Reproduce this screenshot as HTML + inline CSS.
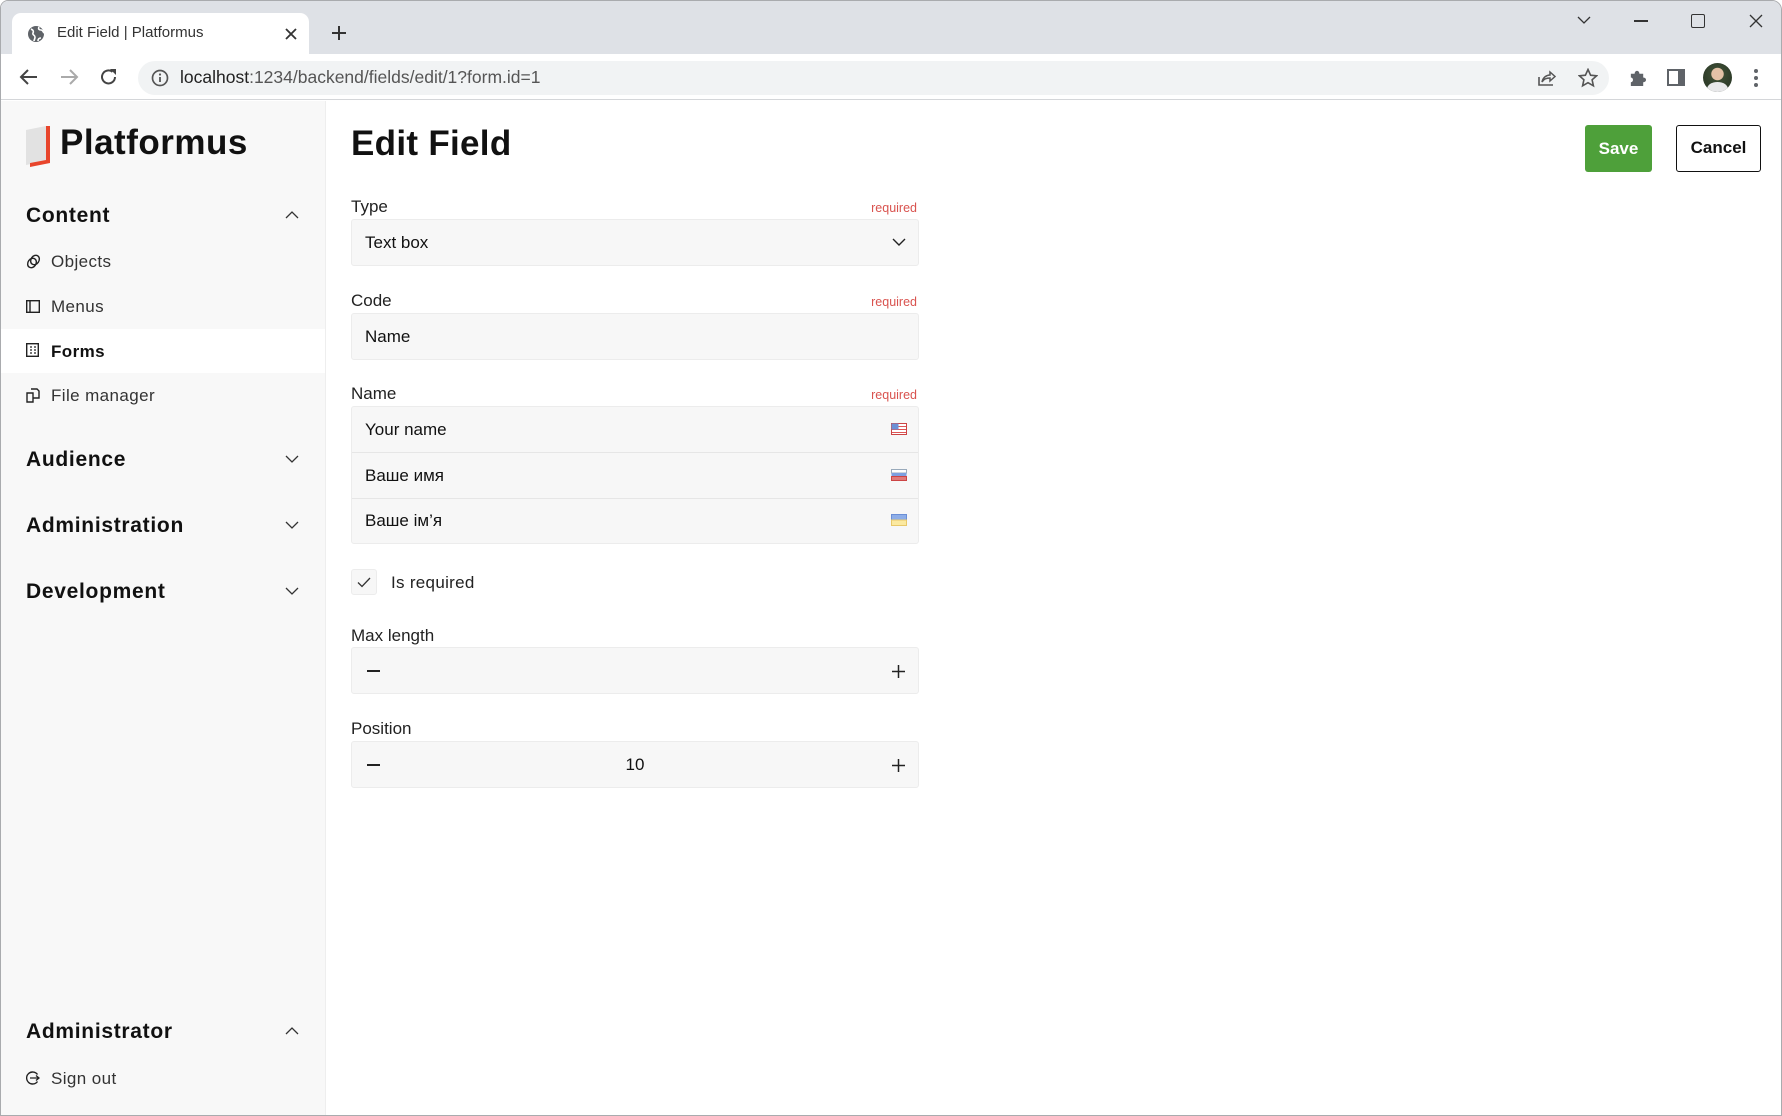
<!DOCTYPE html>
<html><head><meta charset="utf-8">
<style>
*{box-sizing:border-box;margin:0;padding:0}
body{width:1782px;height:1116px;overflow:hidden;background:#fff;font-family:"Liberation Sans","DejaVu Sans",sans-serif;color:#111;position:relative}
.abs{position:absolute}
.win{position:absolute;left:0;top:0;width:1782px;height:1116px;border:1px solid #a9abae;border-radius:8px 10px 0 0;overflow:hidden;background:#fff}
.tabbar{position:absolute;left:0;top:0;width:100%;height:53px;background:#dee1e6}
.tab{position:absolute;left:11px;top:12px;width:297px;height:42px;background:#fff;border-radius:9px 9px 0 0;font-size:15px;color:#333}
.toolbar{position:absolute;left:0;top:53px;width:100%;height:46px;background:#fff;border-bottom:1px solid #d4d6d9}
.omni{position:absolute;left:137px;top:7px;width:1471px;height:34px;border-radius:17px;background:#f1f3f4}
.side{position:absolute;left:0;top:100px;width:325px;height:1016px;background:#f8f8f8;border-right:1px solid #eee}
.sh{position:absolute;left:25px;font-weight:bold;font-size:21px;color:#111;letter-spacing:0.7px}
.si{position:absolute;left:50px;font-size:17px;color:#333;letter-spacing:0.4px}
.chev{position:absolute;left:284px;width:14px;height:14px}
.lbl{position:absolute;left:350px;font-size:17px;color:#222}
.req{position:absolute;right:864px;font-size:12.5px;color:#d9534f}
.inp{position:absolute;left:350px;width:568px;background:#f7f7f7;border:1px solid #ececec;border-radius:3px;font-size:17px;color:#111}
.inp span{position:absolute;left:13px}
</style></head><body>
<div class="win">
 <div class="tabbar">
  <div class="tab">
   <svg class="abs" style="left:15px;top:12px" width="18" height="18" viewBox="0 0 18 18"><circle cx="9" cy="9" r="8" fill="#5f6368"/><path d="M4 4c2 1 3 2 2 4s2 2 2 4-1 3-1 4M12 2c-1 2 0 3 2 3s2 2 3 3M11 16c0-2 1-3 3-3" stroke="#fff" stroke-width="1.6" fill="none"/></svg>
   <div class="abs" style="left:45px;top:11px">Edit Field | Platformus</div>
   <svg class="abs" style="left:273px;top:15px" width="12" height="12" viewBox="0 0 12 12"><path d="M1 1L11 11M11 1L1 11" stroke="#333" stroke-width="1.8"/></svg>
  </div>
  <svg class="abs" style="left:330px;top:24px" width="16" height="16" viewBox="0 0 16 16"><path d="M8 1V15M1 8H15" stroke="#333" stroke-width="2"/></svg>
  <svg class="abs" style="left:1576px;top:14px" width="14" height="10" viewBox="0 0 14 10"><path d="M1 2L7 8L13 2" stroke="#333" stroke-width="1.3" fill="none"/></svg>
  <div class="abs" style="left:1633px;top:19px;width:14px;height:1.5px;background:#333"></div>
  <div class="abs" style="left:1690px;top:13px;width:14px;height:14px;border:1.5px solid #333;border-radius:2px"></div>
  <svg class="abs" style="left:1748px;top:13px" width="14" height="14" viewBox="0 0 14 14"><path d="M1 1L13 13M13 1L1 13" stroke="#333" stroke-width="1.3"/></svg>
 </div>
 <div class="toolbar">
  <svg class="abs" style="left:18px;top:13px" width="20" height="20" viewBox="0 0 20 20"><path d="M18 10H3M9 3L2 10L9 17" stroke="#444" stroke-width="2" fill="none"/></svg>
  <svg class="abs" style="left:58px;top:13px" width="20" height="20" viewBox="0 0 20 20"><path d="M2 10H17M11 3L18 10L11 17" stroke="#aaa" stroke-width="2" fill="none"/></svg>
  <svg class="abs" style="left:98px;top:13px" width="20" height="20" viewBox="0 0 20 20"><path d="M16 10A6.5 6.5 0 1 1 13.5 4.8" stroke="#444" stroke-width="2" fill="none"/><path d="M11 2H17V8Z" fill="#444"/></svg>
  <div class="omni">
   <svg class="abs" style="left:13px;top:8px" width="18" height="18" viewBox="0 0 18 18"><circle cx="9" cy="9" r="7.5" stroke="#555" stroke-width="1.7" fill="none"/><path d="M9 8V13" stroke="#555" stroke-width="1.8"/><circle cx="9" cy="5.5" r="1.1" fill="#555"/></svg>
   <div class="abs" style="left:42px;top:6px;font-size:17.5px;color:#555"><span style="color:#222">localhost</span>:1234/backend/fields/edit/1?form.id=1</div>
   <svg class="abs" style="left:1399px;top:8px" width="20" height="18" viewBox="0 0 20 18"><path d="M2 8V16H16" stroke="#555" stroke-width="1.6" fill="none"/><path d="M5 13C6 8 10 6 13 6V3L18 7.5L13 12V9C9 9 7 10 5 13Z" stroke="#555" stroke-width="1.5" fill="none"/></svg>
   <svg class="abs" style="left:1440px;top:7px" width="20" height="20" viewBox="0 0 20 20"><path d="M10 1.5L12.6 7.2L18.6 7.8L14.1 11.8L15.4 17.8L10 14.7L4.6 17.8L5.9 11.8L1.4 7.8L7.4 7.2Z" stroke="#555" stroke-width="1.6" fill="none"/></svg>
  </div>
  <svg class="abs" style="left:1627px;top:14px" width="19" height="19" viewBox="0 0 20 20"><path d="M3 6H7C7 2 12 2 12 6H16V10C20 10 20 15 16 15V19H3V15C6 15 6 10 3 10Z" fill="#5f6368"/></svg>
  <div class="abs" style="left:1666px;top:15px;width:18px;height:17px;border:2.5px solid #5f6368;border-right-width:7px"></div>
  <div class="abs" style="left:1702px;top:9px;width:29px;height:29px;border-radius:50%;background:radial-gradient(circle at 50% 38%,#e3c1a6 0 26%,#3a4a32 28%,#2f3d2a 60%);overflow:hidden"><div class="abs" style="left:4px;top:19px;width:21px;height:14px;border-radius:50% 50% 0 0;background:#e8e8ea"></div></div>
  <svg class="abs" style="left:1752px;top:14px" width="6" height="20" viewBox="0 0 6 20"><circle cx="3" cy="3" r="2" fill="#5f6368"/><circle cx="3" cy="10" r="2" fill="#5f6368"/><circle cx="3" cy="17" r="2" fill="#5f6368"/></svg>
 </div>

 <div class="side">
  <svg class="abs" style="left:24px;top:23px" width="28" height="44" viewBox="0 0 28 44"><path d="M1 6L21 2V37L1 41Z" fill="#e2e2e2"/><path d="M21 2H25V39L5 43V39L21 36Z" fill="#e8452c"/></svg>
  <div class="abs" style="left:59px;top:22px;font-size:35px;font-weight:bold;color:#111;letter-spacing:0.5px">Platformus</div>
  <div class="sh" style="top:103px">Content</div>
  <svg class="chev" style="top:107px" viewBox="0 0 14 14"><path d="M1 10L7 4L13 10" stroke="#333" stroke-width="1.3" fill="none"/></svg>
  <svg class="abs" style="left:25px;top:153px" width="15" height="15" viewBox="0 0 15 15"><ellipse cx="6" cy="9" rx="4" ry="5" transform="rotate(35 6 9)" stroke="#222" stroke-width="1.4" fill="none"/><ellipse cx="9" cy="6" rx="4" ry="5" transform="rotate(35 9 6)" stroke="#222" stroke-width="1.4" fill="none"/></svg>
  <div class="si" style="top:151px">Objects</div>
  <svg class="abs" style="left:25px;top:199px" width="14" height="13" viewBox="0 0 14 13"><rect x="0.7" y="0.7" width="12.6" height="11.6" stroke="#222" stroke-width="1.4" fill="none"/><path d="M4 1V12" stroke="#222" stroke-width="1.4"/></svg>
  <div class="si" style="top:196px">Menus</div>
  <div class="abs" style="left:0;top:228px;width:324px;height:44px;background:#fff"></div>
  <svg class="abs" style="left:25px;top:242px" width="13" height="14" viewBox="0 0 13 14"><rect x="0.7" y="0.7" width="11.6" height="12.6" stroke="#222" stroke-width="1.4" fill="none"/><path d="M4 4H6M4 7H6M4 10H6M8 4H10M8 7H10M8 10H10" stroke="#222" stroke-width="1.2"/></svg>
  <div class="si" style="top:241px;font-weight:bold;color:#111">Forms</div>
  <svg class="abs" style="left:25px;top:287px" width="14" height="15" viewBox="0 0 14 15"><path d="M1 5H7V14H1ZM5 1H11L13 3V10H7" stroke="#222" stroke-width="1.4" fill="none"/></svg>
  <div class="si" style="top:285px">File manager</div>
  <div class="sh" style="top:347px">Audience</div>
  <svg class="chev" style="top:351px" viewBox="0 0 14 14"><path d="M1 4L7 10L13 4" stroke="#333" stroke-width="1.3" fill="none"/></svg>
  <div class="sh" style="top:413px">Administration</div>
  <svg class="chev" style="top:417px" viewBox="0 0 14 14"><path d="M1 4L7 10L13 4" stroke="#333" stroke-width="1.3" fill="none"/></svg>
  <div class="sh" style="top:479px">Development</div>
  <svg class="chev" style="top:483px" viewBox="0 0 14 14"><path d="M1 4L7 10L13 4" stroke="#333" stroke-width="1.3" fill="none"/></svg>
  <div class="sh" style="top:919px">Administrator</div>
  <svg class="chev" style="top:923px" viewBox="0 0 14 14"><path d="M1 10L7 4L13 10" stroke="#333" stroke-width="1.3" fill="none"/></svg>
  <svg class="abs" style="left:25px;top:970px" width="14" height="14" viewBox="0 0 14 14"><path d="M11.5 3.5A6 6 0 1 0 11.5 10.5" stroke="#222" stroke-width="1.4" fill="none"/><path d="M4 7H13M10 4.5L13 7L10 9.5" stroke="#222" stroke-width="1.3" fill="none"/></svg>
  <div class="si" style="top:968px">Sign out</div>
 </div>

 <div class="abs" style="left:350px;top:123px;font-size:35px;font-weight:bold;color:#111;letter-spacing:0.3px">Edit Field</div>
 <div class="abs" style="left:1584px;top:124px;width:67px;height:47px;background:#4ea03a;border-radius:3px;color:#fff;font-weight:bold;font-size:17px;text-align:center;line-height:47px">Save</div>
 <div class="abs" style="left:1675px;top:124px;width:85px;height:47px;border:1.5px solid #111;border-radius:3px;color:#111;font-weight:bold;font-size:17px;text-align:center;line-height:43px">Cancel</div>

 <div class="lbl" style="top:196px">Type</div><div class="req" style="top:200px">required</div>
 <div class="inp" style="top:218px;height:47px"><span style="top:13px">Text box</span>
  <svg class="abs" style="left:540px;top:17px" width="14" height="10" viewBox="0 0 14 10"><path d="M1 2L7 8L13 2" stroke="#222" stroke-width="1.4" fill="none"/></svg></div>

 <div class="lbl" style="top:290px">Code</div><div class="req" style="top:294px">required</div>
 <div class="inp" style="top:312px;height:47px"><span style="top:13px">Name</span></div>

 <div class="lbl" style="top:383px">Name</div><div class="req" style="top:387px">required</div>
 <div class="inp" style="top:405px;height:138px">
  <span style="top:13px">Your name</span>
  <div class="abs" style="left:0;top:45px;width:100%;height:1px;background:#e6e6e6"></div>
  <span style="top:59px">Ваше имя</span>
  <div class="abs" style="left:0;top:91px;width:100%;height:1px;background:#e6e6e6"></div>
  <span style="top:104px">Ваше ім’я</span>
  <svg class="abs" style="left:539px;top:16px" width="16" height="12" viewBox="0 0 16 12"><rect x="0.5" y="0.5" width="15" height="11" fill="#fff" stroke="#c44"/><path d="M1 3.5H15M1 6.5H15M1 9.5H15" stroke="#d55"/><rect x="0.5" y="0.5" width="7" height="6" fill="#6b8fd6"/></svg>
  <svg class="abs" style="left:539px;top:62px" width="16" height="12" viewBox="0 0 16 12"><rect x="0.5" y="0.5" width="15" height="3.5" fill="#fff" stroke="#9ab"/><rect x="0.5" y="4" width="15" height="3.5" fill="#7d9fe0"/><rect x="0.5" y="7.5" width="15" height="4" fill="#e07a7a" stroke="#c44"/></svg>
  <svg class="abs" style="left:539px;top:107px" width="16" height="12" viewBox="0 0 16 12"><rect x="0.5" y="0.5" width="15" height="5.5" fill="#8eaee8" stroke="#6b8fd6"/><rect x="0.5" y="6" width="15" height="5.5" fill="#fbe9a0" stroke="#e8c86a"/></svg>
 </div>

 <div class="abs" style="left:350px;top:568px;width:26px;height:26px;background:#f7f7f7;border:1px solid #ececec;border-radius:3px">
  <svg class="abs" style="left:5px;top:7px" width="14" height="11" viewBox="0 0 14 11"><path d="M1 5.5L5 9.5L13 1" stroke="#333" stroke-width="1.3" fill="none"/></svg></div>
 <div class="abs" style="left:390px;top:572px;font-size:17px;color:#222;letter-spacing:0.3px">Is required</div>

 <div class="lbl" style="top:625px">Max length</div>
 <div class="inp" style="top:646px;height:47px">
  <div class="abs" style="left:15px;top:22px;width:13px;height:1.5px;background:#222"></div>
  <svg class="abs" style="left:539px;top:16px" width="15" height="15" viewBox="0 0 15 15"><path d="M7.5 1V14M1 7.5H14" stroke="#222" stroke-width="1.5"/></svg>
 </div>

 <div class="lbl" style="top:718px">Position</div>
 <div class="inp" style="top:740px;height:47px">
  <div class="abs" style="left:15px;top:22px;width:13px;height:1.5px;background:#222"></div>
  <div class="abs" style="left:0;width:100%;top:13px;text-align:center">10</div>
  <svg class="abs" style="left:539px;top:16px" width="15" height="15" viewBox="0 0 15 15"><path d="M7.5 1V14M1 7.5H14" stroke="#222" stroke-width="1.5"/></svg>
 </div>
</div>
</body></html>
